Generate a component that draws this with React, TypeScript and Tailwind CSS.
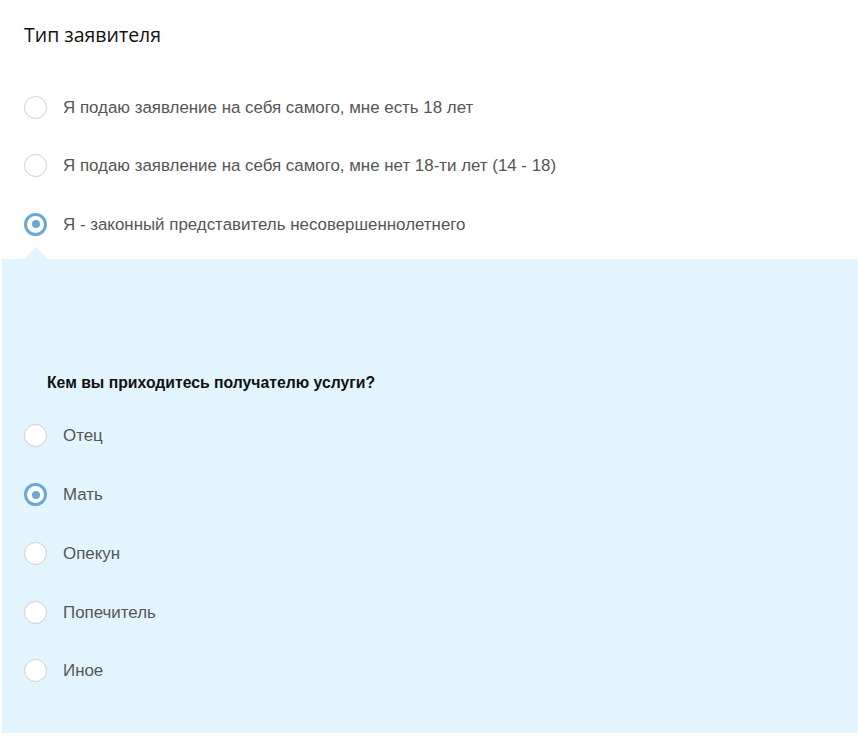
import { useState } from "react";

const applicantTypes = [
  "Я подаю заявление на себя самого, мне есть 18 лет",
  "Я подаю заявление на себя самого, мне нет 18-ти лет (14 - 18)",
  "Я - законный представитель несовершеннолетнего",
];

const relations = ["Отец", "Мать", "Опекун", "Попечитель", "Иное"];

function Radio({ checked }: { checked: boolean }) {
  return checked ? (
    <span className="flex h-[23px] w-[23px] shrink-0 items-center justify-center rounded-full border-[3px] border-[#6aa8d5] bg-white">
      <span className="h-[8px] w-[8px] rounded-full bg-[#6aa8d5]" />
    </span>
  ) : (
    <span className="h-[23px] w-[23px] shrink-0 rounded-full border border-[#cfcfcf] bg-white" />
  );
}

function Option({
  label,
  checked,
  onClick,
  height,
}: {
  label: string;
  checked: boolean;
  onClick: () => void;
  height: string;
}) {
  return (
    <button
      type="button"
      onClick={onClick}
      className={`flex w-full items-center gap-[16px] text-left ${height}`}
    >
      <Radio checked={checked} />
      <span className="pt-[1px] text-[16.9px] leading-[20px] text-[#555555]">{label}</span>
    </button>
  );
}

export default function App() {
  const [type, setType] = useState(2);
  const [relation, setRelation] = useState(1);

  return (
    <main
      className="min-h-screen w-full bg-white"
      style={{ fontFamily: '"Liberation Sans", Arial, sans-serif' }}
    >
      <div className="px-[24px]">
        <div className="flex h-[78px] items-start pt-[21px]">
          <h1
            className="text-[19.5px] leading-[28px] text-[#111111]"
            style={{ fontFamily: '"Open Sans", "Liberation Sans", sans-serif' }}
          >
            Тип заявителя
          </h1>
        </div>
        {applicantTypes.map((label, i) => (
          <Option
            key={label}
            label={label}
            checked={type === i}
            onClick={() => setType(i)}
            height="h-[58.5px]"
          />
        ))}
      </div>

      {type === 2 && (
        <section className="relative ml-[2px] mt-[5.5px] h-[474px] bg-[#e2f5fe] pl-[22px]">
          {/* pointer under the selected option */}
          <span className="absolute left-[22px] top-[-12px] h-0 w-0 border-x-[12px] border-b-[12px] border-x-transparent border-b-[#e2f5fe]" />
          <div className="pt-[114px]">
            <h2 className="pl-[23px] text-[15.75px] font-bold leading-[20px] text-[#111111]">
              Кем вы приходитесь получателю услуги?
            </h2>
            <div className="mt-[13.6px]">
              {relations.map((label, i) => (
                <Option
                  key={label}
                  label={label}
                  checked={relation === i}
                  onClick={() => setRelation(i)}
                  height="h-[58.75px]"
                />
              ))}
            </div>
          </div>
        </section>
      )}
    </main>
  );
}
